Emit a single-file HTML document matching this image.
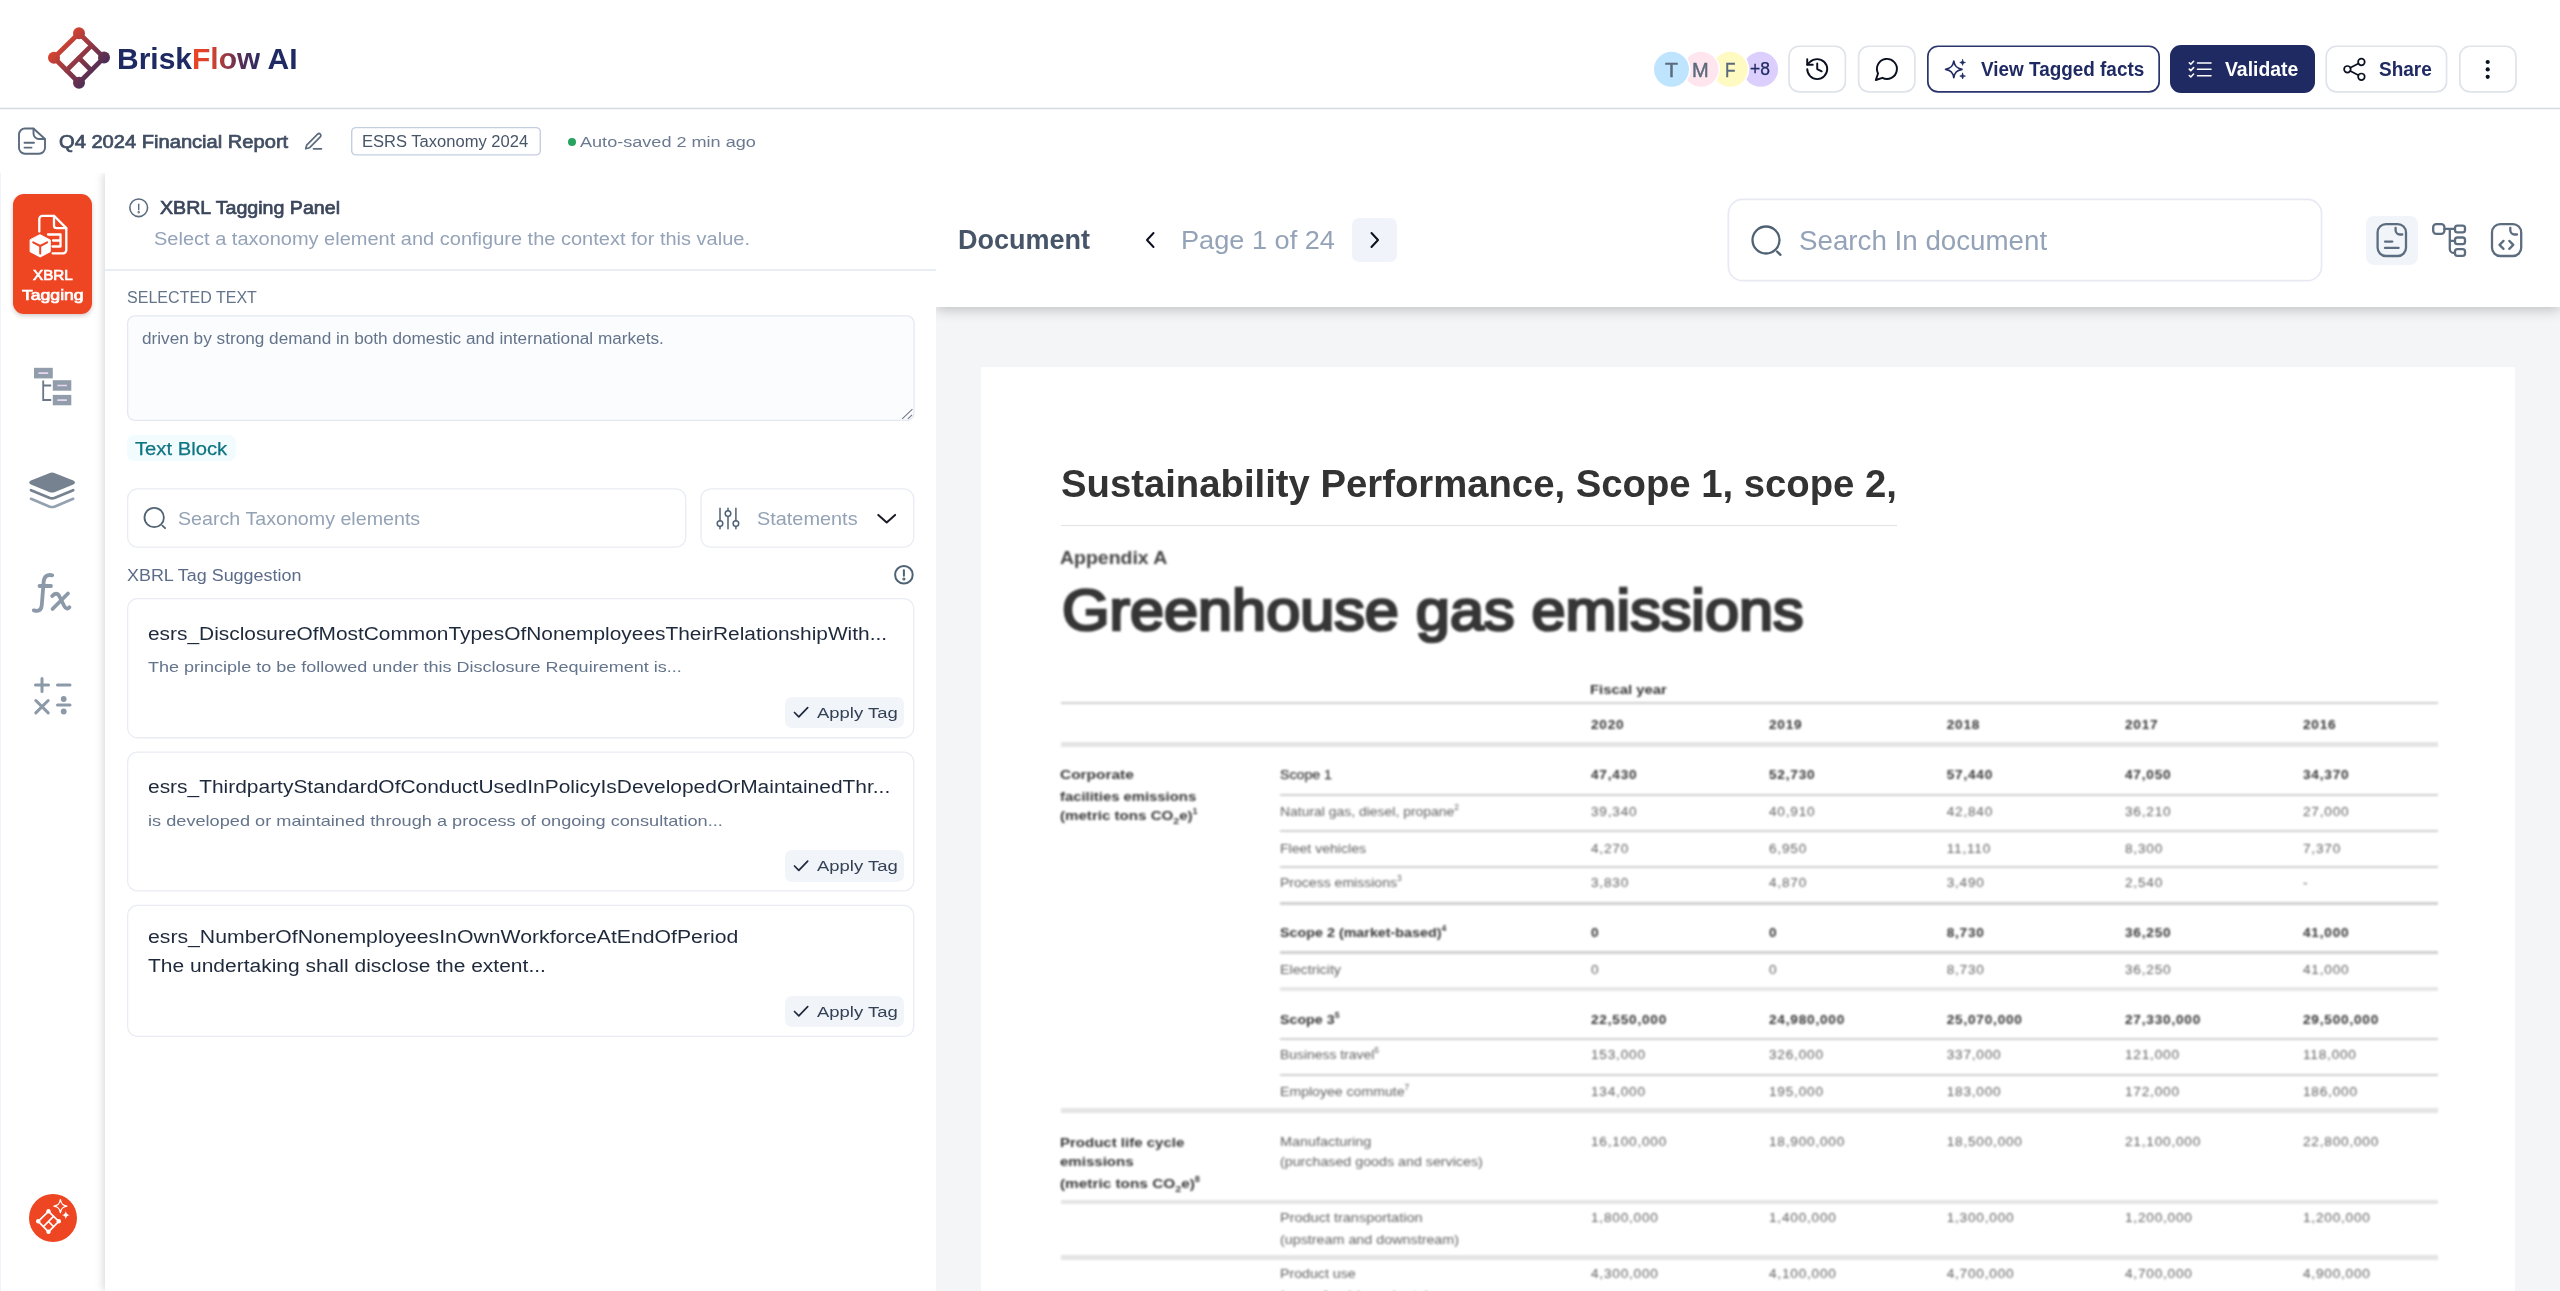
<!DOCTYPE html>
<html lang="en">
<head>
<meta charset="utf-8">
<title>BriskFlow AI - XBRL Tagging</title>
<style>
*{box-sizing:border-box;margin:0;padding:0}
html,body{width:2560px;height:1291px;overflow:hidden;background:#fff;font-family:"Liberation Sans",sans-serif;}
body{position:relative}
.abs{position:absolute}
.t{position:absolute;white-space:nowrap;transform-origin:0 50%;line-height:1}
.b{font-weight:bold}
.sb{-webkit-text-stroke:0.45px currentColor}
.sb1{-webkit-text-stroke:0.25px currentColor}
.sb2{-webkit-text-stroke:0.7px currentColor}
/* layout blocks */
#hdrline{display:none}
#side{left:0;top:173px;width:105px;height:1118px;background:#fff;border-left:1.5px solid #f1f4fa}
#panel{left:105px;top:173px;width:831px;height:1118px;background:#fff;box-shadow:-2px 0 8px rgba(0,0,0,.15);clip-path:inset(0 0 0 -30px)}
#sidecover{display:none}
#phline{left:105px;top:269px;width:831px;height:2px;background:#e9edf4}
#doc{left:936px;top:172px;width:1624px;height:1119px;background:#f4f5f7;overflow:hidden}
#tool{left:0;top:0;width:1624px;height:135px;background:#fff;box-shadow:0 3px 12px rgba(0,0,0,.22)}
#page{left:45px;top:195px;width:1534px;height:1000px;background:#fff}
.btn{border:2px solid #e2e6ec;border-radius:11px;background:#fff}
.card{border:1.5px solid #e8ebf3;border-radius:11px;background:#fff}
.apply{background:#f1f4f9;border-radius:7px}
.av{border-radius:50%;width:35px;height:35px;box-shadow:0 0 0 1.6px #fff}
.ln{position:absolute;background:#cfcfcf;height:1.6px}
.blurw{left:0;top:0;width:2560px;height:1291px;filter:blur(1px)}
.blurw2{left:0;top:0;width:2560px;height:1291px;filter:blur(1.1px)}
.hs{-webkit-text-stroke:2.7px currentColor}
.num{letter-spacing:.8px}
</style>
</head>
<body>
<!-- ===== top header ===== -->
<div class="abs" id="hdrline"></div>

<!-- avatars -->
<svg class="abs" style="left:1640px;top:40px" width="150" height="60" viewBox="1640 40 150 60">
<circle cx="1760.6" cy="69.3" r="17.5" fill="#dccffd"/>
<circle cx="1730.2" cy="69.3" r="19.1" fill="#fff"/><circle cx="1730.2" cy="69.3" r="17.5" fill="#fff9c2"/>
<circle cx="1701" cy="69.3" r="19.1" fill="#fff"/><circle cx="1701" cy="69.3" r="17.5" fill="#ffe6ee"/>
<circle cx="1671.5" cy="69.3" r="19.1" fill="#fff"/><circle cx="1671.5" cy="69.3" r="17.5" fill="#bfe4fd"/>
</svg>

<!-- header buttons -->
<div class="abs" style="left:2170px;top:45px;width:145px;height:48px;border-radius:11px;background:#1f2a63"></div>

<!-- ===== sub header ===== -->
<div class="abs" style="left:568px;top:137.5px;width:8px;height:8px;border-radius:50%;background:#27a35f"></div>

<!-- ===== sidebar + panel ===== -->
<div class="abs" id="side"></div>
<div class="abs" id="panel"></div>
<div class="abs" id="sidecover"></div>
<div class="abs" id="phline"></div>
<div class="abs" style="left:13px;top:194.3px;width:79px;height:119.6px;border-radius:11px;background:#ee4523;box-shadow:0 2px 4px rgba(60,20,10,.22)"></div>
<div class="abs" style="left:28.5px;top:1193.5px;width:48px;height:48px;border-radius:50%;background:#ee4523"></div>

<!-- panel widgets -->
<div class="abs" style="left:126.8px;top:435px;width:109.4px;height:26px;border-radius:7px;background:#f2fcfe"></div>
<div class="abs apply" style="left:785px;top:696.5px;width:119px;height:31.5px"></div>
<div class="abs apply" style="left:785px;top:850px;width:119px;height:31.5px"></div>
<div class="abs apply" style="left:785px;top:995.5px;width:119px;height:31.5px"></div>

<!-- ===== document area ===== -->
<div class="abs" id="doc">
  <div class="abs" id="page"></div>
  <div class="abs" id="tool"></div>
</div>
<div class="abs" style="left:1352px;top:218px;width:45px;height:44px;border-radius:7px;background:#f0f4fa"></div>
<div class="abs" style="left:2365.5px;top:215.5px;width:52.5px;height:49px;border-radius:8px;background:#f1f5f9"></div>
<div class="abs" style="left:1061px;top:524.5px;width:836px;height:1.5px;background:#e3e3e6"></div>

<svg class="abs" style="left:0;top:0" width="2560" height="1291" viewBox="0 0 2560 1291">
<rect x="1789.05" y="46.25" width="56.30" height="45.70" rx="10.2" fill="none" stroke="#dfe3ea" stroke-width="1.7"/>
<rect x="1858.65" y="46.25" width="56.20" height="45.70" rx="10.2" fill="none" stroke="#dfe3ea" stroke-width="1.7"/>
<rect x="1927.85" y="46.25" width="231.30" height="45.70" rx="10.2" fill="none" stroke="#2a356d" stroke-width="1.7"/>
<rect x="2326.25" y="46.25" width="120.30" height="45.70" rx="10.2" fill="none" stroke="#dfe3ea" stroke-width="1.7"/>
<rect x="2459.85" y="46.25" width="56.10" height="45.70" rx="10.2" fill="none" stroke="#dfe3ea" stroke-width="1.7"/>
<rect x="351.70" y="127.60" width="188.60" height="27.30" rx="4.3" fill="none" stroke="#c3cee2" stroke-width="1.4"/>
<rect x="127.65" y="315.85" width="786.40" height="104.50" rx="7.3" fill="#fbfcfe" stroke="#e4e8f1" stroke-width="1.3"/>
<rect x="127.65" y="488.85" width="558.10" height="58.20" rx="9.8" fill="none" stroke="#e9ecf4" stroke-width="1.3"/>
<rect x="700.95" y="488.85" width="212.80" height="58.20" rx="9.8" fill="none" stroke="#e9ecf4" stroke-width="1.3"/>
<rect x="127.65" y="598.65" width="786.10" height="139.10" rx="9.8" fill="none" stroke="#e9ecf4" stroke-width="1.3"/>
<rect x="127.65" y="752.15" width="786.10" height="138.80" rx="9.8" fill="none" stroke="#e9ecf4" stroke-width="1.3"/>
<rect x="127.65" y="905.35" width="786.10" height="131.00" rx="9.8" fill="none" stroke="#e9ecf4" stroke-width="1.3"/>
<rect x="1728.35" y="199.35" width="593.20" height="81.30" rx="14.2" fill="#fff" stroke="#e8eaf3" stroke-width="1.7"/>
<path d="M0 108.6H2560" stroke="#d4dae4" stroke-width="1.5"/>
</svg>
<!-- table lines -->


<!-- ===== text ===== -->
<span class="t b" style="left:117.0px;top:43.9px;font-size:29.4px;color:#1f2a63;transform:scaleX(1.0201);">Brisk<span style="background:linear-gradient(90deg,#ee4523 0%,#d2412f 30%,#5b2f55 70%,#2a2a62 100%);-webkit-background-clip:text;background-clip:text;color:transparent">Flow</span> AI</span>
<span class="t b" style="left:1980.5px;top:59.9px;font-size:19.5px;color:#1f2a63;transform:scaleX(0.9696);">View Tagged facts</span>
<span class="t b" style="left:2224.6px;top:59.7px;font-size:19.5px;color:#fff;transform:scaleX(0.9937);">Validate</span>
<span class="t b" style="left:2378.9px;top:59.7px;font-size:19.5px;color:#1f2a63;transform:scaleX(0.9747);">Share</span>
<span class="t sb" style="left:1664.8px;top:58.5px;font-size:21px;color:#5b6b7e;transform:scaleX(1.0125);">T</span>
<span class="t sb" style="left:1692.3px;top:58.5px;font-size:21px;color:#5b6b7e;transform:scaleX(0.9545);">M</span>
<span class="t sb" style="left:1724.9px;top:58.5px;font-size:21px;color:#5b6b7e;transform:scaleX(0.8188);">F</span>
<span class="t sb1" style="left:1750.3px;top:60.7px;font-size:17.5px;color:#1f2a63;transform:scaleX(0.9985);">+8</span>
<span class="t sb2" style="left:58.9px;top:133.0px;font-size:18px;color:#414e63;transform:scaleX(1.1174);">Q4 2024 Financial Report</span>
<span class="t " style="left:362.4px;top:133.8px;font-size:16px;color:#475569;transform:scaleX(1.0340);">ESRS Taxonomy 2024</span>
<span class="t " style="left:580.4px;top:134.2px;font-size:15.2px;color:#6b7a90;transform:scaleX(1.1903);">Auto-saved 2 min ago</span>
<span class="t sb2" style="left:32.7px;top:267.7px;font-size:14px;color:#fff;transform:scaleX(1.0871);">XBRL</span>
<span class="t sb2" style="left:22.0px;top:287.8px;font-size:14px;color:#fff;transform:scaleX(1.2566);">Tagging</span>
<span class="t sb2" style="left:160.0px;top:199.1px;font-size:18.6px;color:#3b465b;transform:scaleX(1.0557);">XBRL Tagging Panel</span>
<span class="t " style="left:154.3px;top:229.9px;font-size:18.3px;color:#94a3b8;transform:scaleX(1.0942);">Select a taxonomy element and configure the context for this value.</span>
<span class="t " style="left:126.5px;top:289.7px;font-size:15.6px;color:#64748b;transform:scaleX(1.0292);">SELECTED TEXT</span>
<span class="t " style="left:142.1px;top:330.7px;font-size:15.8px;color:#64748b;transform:scaleX(1.0884);">driven by strong demand in both domestic and international markets.</span>
<span class="t sb1" style="left:135.3px;top:439.1px;font-size:19.2px;color:#0f7582;transform:scaleX(1.0545);">Text Block</span>
<span class="t " style="left:177.7px;top:509.4px;font-size:19px;color:#93a2b5;transform:scaleX(1.0345);">Search Taxonomy elements</span>
<span class="t " style="left:757.0px;top:509.4px;font-size:19px;color:#93a2b5;transform:scaleX(1.0466);">Statements</span>
<span class="t " style="left:126.6px;top:567.7px;font-size:15.6px;color:#5b6b88;transform:scaleX(1.1492);">XBRL Tag Suggestion</span>
<span class="t " style="left:147.5px;top:624.7px;font-size:18px;color:#1e293b;transform:scaleX(1.1598);">esrs_DisclosureOfMostCommonTypesOfNonemployeesTheirRelationshipWith...</span>
<span class="t " style="left:147.6px;top:659.2px;font-size:15px;color:#64748b;transform:scaleX(1.2011);">The principle to be followed under this Disclosure Requirement is...</span>
<span class="t " style="left:817.2px;top:704.9px;font-size:15.3px;color:#334155;transform:scaleX(1.2060);">Apply Tag</span>
<span class="t " style="left:147.5px;top:778.2px;font-size:18px;color:#1e293b;transform:scaleX(1.1628);">esrs_ThirdpartyStandardOfConductUsedInPolicyIsDevelopedOrMaintainedThr...</span>
<span class="t " style="left:147.6px;top:812.8px;font-size:15px;color:#64748b;transform:scaleX(1.2114);">is developed or maintained through a process of ongoing consultation...</span>
<span class="t " style="left:817.2px;top:858.4px;font-size:15.3px;color:#334155;transform:scaleX(1.2060);">Apply Tag</span>
<span class="t " style="left:147.5px;top:927.6px;font-size:18px;color:#1e293b;transform:scaleX(1.1785);">esrs_NumberOfNonemployeesInOwnWorkforceAtEndOfPeriod</span>
<span class="t " style="left:147.5px;top:957.1px;font-size:18px;color:#1e293b;transform:scaleX(1.1661);">The undertaking shall disclose the extent...</span>
<span class="t " style="left:817.2px;top:1003.9px;font-size:15.3px;color:#334155;transform:scaleX(1.2060);">Apply Tag</span>
<span class="t b" style="left:958.1px;top:225.7px;font-size:28px;color:#475569;transform:scaleX(0.9648);">Document</span>
<span class="t " style="left:1181.1px;top:227.0px;font-size:26.5px;color:#94a3b8;transform:scaleX(1.0240);">Page 1 of 24</span>
<span class="t " style="left:1798.8px;top:226.7px;font-size:27.5px;color:#94a3b8;transform:scaleX(1.0082);">Search In document</span>
<span class="t b" style="left:1061.0px;top:463.6px;font-size:39px;color:#333;transform:scaleX(0.9813);">Sustainability Performance, Scope 1, scope 2,</span>
<div class="abs blurw2">
<span class="t b" style="left:1060.3px;top:548.6px;font-size:18px;color:#444;transform:scaleX(1.0807);">Appendix A</span>
<span class="t hs" style="left:1062.2px;top:581.5px;font-size:57.5px;color:#363636;transform:scaleX(1.0644);">Greenhouse gas emissions</span>
</div>
<div class="abs blurw">
<div class="ln" style="left:1061.0px;top:701.5px;width:1376.5px;height:2.0px;background:#cfcfcf"></div>
<div class="ln" style="left:1061.0px;top:742.3px;width:1376.5px;height:4.6px;background:#e4e4e4"></div>
<div class="ln" style="left:1280.0px;top:793.9px;width:1157.5px;height:2.2px;background:#d0d0d0"></div>
<div class="ln" style="left:1280.0px;top:830.2px;width:1157.5px;height:2.2px;background:#d0d0d0"></div>
<div class="ln" style="left:1280.0px;top:865.9px;width:1157.5px;height:2.2px;background:#d0d0d0"></div>
<div class="ln" style="left:1280.0px;top:902.4px;width:1157.5px;height:2.2px;background:#d0d0d0"></div>
<div class="ln" style="left:1280.0px;top:951.4px;width:1157.5px;height:2.2px;background:#d0d0d0"></div>
<div class="ln" style="left:1280.0px;top:1038.3px;width:1157.5px;height:2.2px;background:#d0d0d0"></div>
<div class="ln" style="left:1280.0px;top:1073.9px;width:1157.5px;height:2.2px;background:#d0d0d0"></div>
<div class="ln" style="left:1280.0px;top:986.8px;width:1157.5px;height:4.4px;background:#e6e6e6"></div>
<div class="ln" style="left:1061.0px;top:1108.2px;width:1376.5px;height:4.8px;background:#e4e4e4"></div>
<div class="ln" style="left:1061.0px;top:1199.6px;width:1376.5px;height:4.8px;background:#e4e4e4"></div>
<div class="ln" style="left:1061.0px;top:1255.2px;width:1376.5px;height:4.8px;background:#e4e4e4"></div>
<span class="t b  num" style="left:1591.0px;top:717.8px;font-size:13.6px;color:#363636;">2020</span>
<span class="t b  num" style="left:1769.0px;top:717.8px;font-size:13.6px;color:#363636;">2019</span>
<span class="t b  num" style="left:1946.7px;top:717.8px;font-size:13.6px;color:#363636;">2018</span>
<span class="t b  num" style="left:2125.0px;top:717.8px;font-size:13.6px;color:#363636;">2017</span>
<span class="t b  num" style="left:2303.0px;top:717.8px;font-size:13.6px;color:#363636;">2016</span>
<span class="t sb1" style="left:1279.5px;top:768.4px;font-size:13.6px;color:#363636;transform:scaleX(1.0421);">Scope 1</span>
<span class="t b  num" style="left:1591.0px;top:768.4px;font-size:13.6px;color:#363636;">47,430</span>
<span class="t b  num" style="left:1769.0px;top:768.4px;font-size:13.6px;color:#363636;">52,730</span>
<span class="t b  num" style="left:1946.7px;top:768.4px;font-size:13.6px;color:#363636;">57,440</span>
<span class="t b  num" style="left:2125.0px;top:768.4px;font-size:13.6px;color:#363636;">47,050</span>
<span class="t b  num" style="left:2303.0px;top:768.4px;font-size:13.6px;color:#363636;">34,370</span>
<span class="t " style="left:1279.5px;top:805.4px;font-size:13.6px;color:#626262;transform:scaleX(1.0252);">Natural gas, diesel, propane<sup style="font-size:60%;line-height:0;vertical-align:super">2</sup></span>
<span class="t num" style="left:1591.0px;top:805.4px;font-size:13.6px;color:#626262;">39,340</span>
<span class="t num" style="left:1769.0px;top:805.4px;font-size:13.6px;color:#626262;">40,910</span>
<span class="t num" style="left:1946.7px;top:805.4px;font-size:13.6px;color:#626262;">42,840</span>
<span class="t num" style="left:2125.0px;top:805.4px;font-size:13.6px;color:#626262;">36,210</span>
<span class="t num" style="left:2303.0px;top:805.4px;font-size:13.6px;color:#626262;">27,000</span>
<span class="t " style="left:1279.5px;top:841.9px;font-size:13.6px;color:#626262;transform:scaleX(1.0346);">Fleet vehicles</span>
<span class="t num" style="left:1591.0px;top:841.9px;font-size:13.6px;color:#626262;">4,270</span>
<span class="t num" style="left:1769.0px;top:841.9px;font-size:13.6px;color:#626262;">6,950</span>
<span class="t num" style="left:1946.7px;top:841.9px;font-size:13.6px;color:#626262;">11,110</span>
<span class="t num" style="left:2125.0px;top:841.9px;font-size:13.6px;color:#626262;">8,300</span>
<span class="t num" style="left:2303.0px;top:841.9px;font-size:13.6px;color:#626262;">7,370</span>
<span class="t " style="left:1279.5px;top:876.1px;font-size:13.6px;color:#626262;transform:scaleX(1.0323);">Process emissions<sup style="font-size:60%;line-height:0;vertical-align:super">3</sup></span>
<span class="t num" style="left:1591.0px;top:876.1px;font-size:13.6px;color:#626262;">3,830</span>
<span class="t num" style="left:1769.0px;top:876.1px;font-size:13.6px;color:#626262;">4,870</span>
<span class="t num" style="left:1946.7px;top:876.1px;font-size:13.6px;color:#626262;">3,490</span>
<span class="t num" style="left:2125.0px;top:876.1px;font-size:13.6px;color:#626262;">2,540</span>
<span class="t num" style="left:2303.0px;top:876.1px;font-size:13.6px;color:#626262;">-</span>
<span class="t b" style="left:1279.5px;top:926.4px;font-size:13.6px;color:#363636;transform:scaleX(1.0531);">Scope 2 (market-based)<sup style="font-size:60%;line-height:0;vertical-align:super">4</sup></span>
<span class="t b  num" style="left:1591.0px;top:926.4px;font-size:13.6px;color:#363636;">0</span>
<span class="t b  num" style="left:1769.0px;top:926.4px;font-size:13.6px;color:#363636;">0</span>
<span class="t b  num" style="left:1946.7px;top:926.4px;font-size:13.6px;color:#363636;">8,730</span>
<span class="t b  num" style="left:2125.0px;top:926.4px;font-size:13.6px;color:#363636;">36,250</span>
<span class="t b  num" style="left:2303.0px;top:926.4px;font-size:13.6px;color:#363636;">41,000</span>
<span class="t " style="left:1279.5px;top:963.4px;font-size:13.6px;color:#626262;transform:scaleX(1.0486);">Electricity</span>
<span class="t num" style="left:1591.0px;top:963.4px;font-size:13.6px;color:#626262;">0</span>
<span class="t num" style="left:1769.0px;top:963.4px;font-size:13.6px;color:#626262;">0</span>
<span class="t num" style="left:1946.7px;top:963.4px;font-size:13.6px;color:#626262;">8,730</span>
<span class="t num" style="left:2125.0px;top:963.4px;font-size:13.6px;color:#626262;">36,250</span>
<span class="t num" style="left:2303.0px;top:963.4px;font-size:13.6px;color:#626262;">41,000</span>
<span class="t b" style="left:1279.5px;top:1013.4px;font-size:13.6px;color:#363636;transform:scaleX(1.0478);">Scope 3<sup style="font-size:60%;line-height:0;vertical-align:super">5</sup></span>
<span class="t b  num" style="left:1591.0px;top:1013.4px;font-size:13.6px;color:#363636;">22,550,000</span>
<span class="t b  num" style="left:1769.0px;top:1013.4px;font-size:13.6px;color:#363636;">24,980,000</span>
<span class="t b  num" style="left:1946.7px;top:1013.4px;font-size:13.6px;color:#363636;">25,070,000</span>
<span class="t b  num" style="left:2125.0px;top:1013.4px;font-size:13.6px;color:#363636;">27,330,000</span>
<span class="t b  num" style="left:2303.0px;top:1013.4px;font-size:13.6px;color:#363636;">29,500,000</span>
<span class="t " style="left:1279.5px;top:1048.4px;font-size:13.6px;color:#626262;transform:scaleX(1.0221);">Business travel<sup style="font-size:60%;line-height:0;vertical-align:super">6</sup></span>
<span class="t num" style="left:1591.0px;top:1048.4px;font-size:13.6px;color:#626262;">153,000</span>
<span class="t num" style="left:1769.0px;top:1048.4px;font-size:13.6px;color:#626262;">326,000</span>
<span class="t num" style="left:1946.7px;top:1048.4px;font-size:13.6px;color:#626262;">337,000</span>
<span class="t num" style="left:2125.0px;top:1048.4px;font-size:13.6px;color:#626262;">121,000</span>
<span class="t num" style="left:2303.0px;top:1048.4px;font-size:13.6px;color:#626262;">118,000</span>
<span class="t " style="left:1279.5px;top:1085.4px;font-size:13.6px;color:#626262;transform:scaleX(1.0361);">Employee commute<sup style="font-size:60%;line-height:0;vertical-align:super">7</sup></span>
<span class="t num" style="left:1591.0px;top:1085.4px;font-size:13.6px;color:#626262;">134,000</span>
<span class="t num" style="left:1769.0px;top:1085.4px;font-size:13.6px;color:#626262;">195,000</span>
<span class="t num" style="left:1946.7px;top:1085.4px;font-size:13.6px;color:#626262;">183,000</span>
<span class="t num" style="left:2125.0px;top:1085.4px;font-size:13.6px;color:#626262;">172,000</span>
<span class="t num" style="left:2303.0px;top:1085.4px;font-size:13.6px;color:#626262;">186,000</span>
<span class="t " style="left:1279.5px;top:1135.4px;font-size:13.6px;color:#626262;transform:scaleX(1.0586);">Manufacturing</span>
<span class="t num" style="left:1591.0px;top:1135.4px;font-size:13.6px;color:#626262;">16,100,000</span>
<span class="t num" style="left:1769.0px;top:1135.4px;font-size:13.6px;color:#626262;">18,900,000</span>
<span class="t num" style="left:1946.7px;top:1135.4px;font-size:13.6px;color:#626262;">18,500,000</span>
<span class="t num" style="left:2125.0px;top:1135.4px;font-size:13.6px;color:#626262;">21,100,000</span>
<span class="t num" style="left:2303.0px;top:1135.4px;font-size:13.6px;color:#626262;">22,800,000</span>
<span class="t " style="left:1279.5px;top:1155.1px;font-size:13.6px;color:#626262;transform:scaleX(1.0483);">(purchased goods and services)</span>
<span class="t " style="left:1279.5px;top:1210.9px;font-size:13.6px;color:#626262;transform:scaleX(1.0655);">Product transportation</span>
<span class="t num" style="left:1591.0px;top:1210.9px;font-size:13.6px;color:#626262;">1,800,000</span>
<span class="t num" style="left:1769.0px;top:1210.9px;font-size:13.6px;color:#626262;">1,400,000</span>
<span class="t num" style="left:1946.7px;top:1210.9px;font-size:13.6px;color:#626262;">1,300,000</span>
<span class="t num" style="left:2125.0px;top:1210.9px;font-size:13.6px;color:#626262;">1,200,000</span>
<span class="t num" style="left:2303.0px;top:1210.9px;font-size:13.6px;color:#626262;">1,200,000</span>
<span class="t " style="left:1279.5px;top:1233.2px;font-size:13.6px;color:#626262;transform:scaleX(1.0530);">(upstream and downstream)</span>
<span class="t " style="left:1279.5px;top:1266.7px;font-size:13.6px;color:#626262;transform:scaleX(1.0434);">Product use</span>
<span class="t num" style="left:1591.0px;top:1266.7px;font-size:13.6px;color:#626262;">4,300,000</span>
<span class="t num" style="left:1769.0px;top:1266.7px;font-size:13.6px;color:#626262;">4,100,000</span>
<span class="t num" style="left:1946.7px;top:1266.7px;font-size:13.6px;color:#626262;">4,700,000</span>
<span class="t num" style="left:2125.0px;top:1266.7px;font-size:13.6px;color:#626262;">4,700,000</span>
<span class="t num" style="left:2303.0px;top:1266.7px;font-size:13.6px;color:#626262;">4,900,000</span>
<span class="t " style="left:1279.4px;top:1288.9px;font-size:13.6px;color:#626262;transform:scaleX(1.1559);">(use of sold products)</span>
<span class="t b" style="left:1590.3px;top:683.1px;font-size:13.6px;color:#363636;transform:scaleX(1.0916);">Fiscal year</span>
<span class="t b" style="left:1060.3px;top:768.4px;font-size:13.6px;color:#363636;transform:scaleX(1.1356);">Corporate</span>
<span class="t b" style="left:1060.3px;top:790.0px;font-size:13.6px;color:#363636;transform:scaleX(1.0920);">facilities emissions</span>
<span class="t b" style="left:1060.3px;top:808.7px;font-size:13.6px;color:#363636;transform:scaleX(1.1110);">(metric tons CO<sub style="font-size:70%;line-height:0">2</sub>e)<sup style="font-size:60%;line-height:0;vertical-align:super">1</sup></span>
<span class="t b" style="left:1060.3px;top:1135.8px;font-size:13.6px;color:#363636;transform:scaleX(1.1037);">Product life cycle</span>
<span class="t b" style="left:1060.3px;top:1155.1px;font-size:13.6px;color:#363636;transform:scaleX(1.1076);">emissions</span>
<span class="t b" style="left:1060.3px;top:1176.8px;font-size:13.6px;color:#363636;transform:scaleX(1.1297);">(metric tons CO<sub style="font-size:70%;line-height:0">2</sub>e)<sup style="font-size:60%;line-height:0;vertical-align:super">8</sup></span>
</div>

<!-- ===== icons ===== -->
<svg class="abs" style="left:0;top:0;pointer-events:none" width="2560" height="1291" viewBox="0 0 2560 1291" fill="none" stroke-linecap="round" stroke-linejoin="round">
<defs>
<linearGradient id="lg" gradientUnits="userSpaceOnUse" x1="56" y1="38" x2="102" y2="80"><stop offset="0" stop-color="#e9462a"/><stop offset="1" stop-color="#33295f"/></linearGradient>
</defs>
<!-- logo -->
<g stroke="url(#lg)" stroke-width="4.8">
<path d="M79 33.3L54 57.8L79 82.8L104 57.6Z"/>
<path d="M66.6 70.2L91.4 45.6"/>
<path d="M79 58L91.2 70.4"/>
</g>
<g fill="url(#lg)"><circle cx="79" cy="33.3" r="6"/><circle cx="54" cy="57.8" r="6"/><circle cx="104" cy="57.6" r="6"/><circle cx="79" cy="82.8" r="6"/></g>

<!-- history icon -->
<g stroke="#0b1020" stroke-width="1.75" transform="translate(1803.9 55.8) scale(1.11)">
<path d="M3 12a9 9 0 1 0 9-9 9.75 9.75 0 0 0-6.74 2.74L3 8"/><path d="M3 3v5h5"/><path d="M12 7v5l4 2"/>
</g>
<!-- comment icon -->
<g stroke="#0b1020" stroke-width="1.75" transform="translate(1873.6 55.6) scale(1.11)">
<path d="M7.9 20A9 9 0 1 0 4 16.1L2 22Z"/>
</g>
<!-- sparkles -->
<g stroke="#1f2a63" stroke-width="1.7">
<path d="M1953.8 61.2c.9 5.2 2.9 7.3 8.2 8.2c-5.3.9-7.3 3-8.2 8.2c-.9-5.2-2.900-7.3-8.2-8.200c5.300-.9 7.300-3 8.200-8.200z"/>
<path d="M1962.600 59.700c.3 1.800 1 2.500 2.800 2.800c-1.800.300-2.500 1-2.800 2.800c-.3-1.800-1-2.500-2.800-2.800c1.800-.300 2.500-1 2.800-2.800z" fill="#1f2a63" stroke-width="0.8"/>
<path d="M1962.600 73.300c.3 1.800 1 2.500 2.800 2.800c-1.800.300-2.500 1-2.800 2.800c-.3-1.800-1-2.500-2.800-2.800c1.800-.300 2.500-1 2.800-2.800z" fill="#1f2a63" stroke-width="0.8"/>
</g>
<!-- list-check (validate) -->
<g stroke="#fff" stroke-width="1.6">
<path d="M2197.500 63h13.500M2197.500 69.300h13.500M2197.500 75.700h13.500"/>
<path d="M2189.300 62.800l1.500 1.500l2.800-3M2189.300 69.100l1.500 1.500l2.800-3M2189.300 75.500l1.500 1.500l2.800-3"/>
</g>
<!-- share -->
<g stroke="#0b1020" stroke-width="1.7">
<circle cx="2361.400" cy="62" r="3.300"/><circle cx="2347.400" cy="69.300" r="3.300"/><circle cx="2361.400" cy="76.800" r="3.300"/>
<path d="M2350.300 67.800l8.200-4.300M2350.300 70.900l8.200 4.300"/>
</g>
<!-- more dots -->
<g fill="#0b1020"><circle cx="2487.700" cy="62" r="2.100"/><circle cx="2487.700" cy="69.400" r="2.100"/><circle cx="2487.700" cy="76.800" r="2.100"/></g>

<!-- file icon (subheader) -->
<g stroke="#5b6b7e" stroke-width="1.9">
<path d="M33.500 128.500h-8.500a6 6 0 0 0-6 6v13.300a6 6 0 0 0 6 6h14a6 6 0 0 0 6-6v-8.800z"/>
<path d="M33.500 128.700v4.800a5.500 5.500 0 0 0 5.500 5.500h5.800"/>
<path d="M24.500 142.700h9.500M24.500 147.600h7"/>
</g>
<!-- pencil -->
<g stroke="#5b6b7e" stroke-width="1.7">
<path d="M317.600 134.200a1.900 1.900 0 0 1 2.700 2.700l-10.900 10.900l-3.700 1l1-3.700z"/>
<path d="M313.500 148.800h8"/>
</g>
<!-- info icons -->
<g stroke="#5b6b7e" stroke-width="1.6">
<circle cx="138.700" cy="207.800" r="8.850"/><path d="M138.700 204.200v5.600" stroke-width="1.400"/><circle cx="138.700" cy="212.200" r=".4" fill="#5b6b7e"/>
</g>
<g stroke="#4f6274" stroke-width="2">
<circle cx="903.900" cy="574.700" r="8.800"/><path d="M903.900 570.300v5.500"/><circle cx="903.900" cy="579" r=".6" fill="#4f6274"/>
</g>

<!-- XBRL icon -->
<g stroke="#fff" stroke-width="2.3">
<path d="M39.300 231.500v-12.500a3.200 3.200 0 0 1 3.200-3.200h11.500l12.300 12.300v22a3.200 3.200 0 0 1-3.200 3.200h-10.500"/>
<path d="M54 216v9.500a2.700 2.700 0 0 0 2.700 2.700h9.500"/>
<path d="M48 234.500h12.500v12h-8M53 240.500h7.500"/>
</g>
<path d="M40.200 234.800l10.100 5.300v11.600l-10.100 5.300l-10.100-5.300v-11.600z" fill="#fff" stroke="#fff" stroke-width="1"/>
<path d="M33.200 242.300l7 3.700l7-3.700M40.200 246v7.500" stroke="#ee4523" stroke-width="2"/>

<!-- sidebar: tree -->
<g>
<rect x="34" y="367.800" width="18.800" height="10.600" fill="#929dab"/>
<rect x="52.800" y="380.200" width="18.500" height="10.500" fill="#929dab"/>
<rect x="52.800" y="394.900" width="18.500" height="10.400" fill="#929dab"/>
<path d="M43.200 380.500v19.500h8M43.200 385.500h8" stroke="#6b7686" stroke-width="1.8" stroke-linecap="butt" stroke-linejoin="miter"/>
<path d="M38.400 373.100h9.800M57.300 385.500h9.600M57.300 400.100h9.600" stroke="#e6d8f1" stroke-width="1.700" stroke-linecap="butt"/>
</g>
<!-- sidebar: layers -->
<path d="M49.200 473.200c1.900-.800 3.900-.800 5.800 0l18.300 7.400c2.300 1 2.300 3 0 4l-18.300 7.400c-1.900.800-3.900.800-5.800 0l-18.300-7.400c-2.300-1-2.300-3 0-4z" fill="#76828f"/>
<path d="M31 490.200l18.200 7.600c1.900.800 3.900.800 5.800 0l18.200-7.600" stroke="#76828f" stroke-width="2.700"/>
<path d="M31 498.800l18.200 7.600c1.900.800 3.900.800 5.800 0l18.200-7.600" stroke="#94a2b0" stroke-width="2.700"/>
<!-- sidebar: fx -->
<g stroke="#8c99a8" stroke-width="3.800">
<path d="M52.200 575.300c-5.500-1.300-8.200 1.500-8.600 7l-1.800 22.500c-.4 5.500-3.300 7-8 5.600"/>
<path d="M39.500 586h11.500"/>
<path d="M52.200 596c2.500-3 5.300-3 7 0l5 10c1.500 3 3.500 3.300 5.200 1.200"/>
<path d="M68 593.500l-15.500 15.500"/>
</g>
<!-- sidebar: calc -->
<g stroke="#8c99a8" stroke-width="3">
<path d="M35.500 685h13M42 678.500v13"/>
<path d="M57.500 685h12.500"/>
<path d="M35.800 700.500l12.400 12.400M48.200 700.500l-12.400 12.400"/>
<path d="M57.500 705h12.500"/>
</g>
<g fill="#8c99a8"><circle cx="63.700" cy="699" r="2.900"/><circle cx="63.700" cy="711.500" r="2.900"/></g>

<!-- bottom-left AI logo -->
<g stroke="#fff" stroke-width="1.700">
<path d="M48.500 1211.300l-10.300 10l10.300 10.500l10.300-10.500z"/>
<path d="M43.500 1226.500l10-10.100M48.500 1221.500l5 5"/>
</g>
<g fill="#fff"><circle cx="48.500" cy="1211.300" r="2.200"/><circle cx="38.200" cy="1221.300" r="2.200"/><circle cx="58.800" cy="1221.300" r="2.200"/><circle cx="48.500" cy="1231.800" r="2.200"/></g>
<path d="M60.400 1199.700c.7 4.200 2.200 5.800 6.500 6.500c-4.300.700-5.800 2.300-6.500 6.500c-.7-4.200-2.200-5.800-6.500-6.500c4.300-.700 5.800-2.300 6.500-6.500z" stroke="#fff" stroke-width="1.300"/>
<path d="M65.800 1211c.5 2.700 1.400 3.600 4.100 4.100c-2.700.5-3.600 1.400-4.100 4.100c-.5-2.700-1.400-3.600-4.100-4.100c2.700-.5 3.600-1.400 4.100-4.100z" fill="#fff"/>

<!-- textarea resize handle -->
<path d="M902.2 418.8l10.2-9.6M907.8 418.8l4.300-4" stroke="#73778a" stroke-width="1.100" stroke-linecap="butt"/>
<!-- panel search icon -->
<g stroke="#4f6274" stroke-width="1.800"><circle cx="154.200" cy="517.500" r="9.700"/><path d="M162.400 525.700l2.700 2.500"/></g>
<!-- sliders -->
<g stroke="#4f6274" stroke-width="1.500">
<path d="M720 508.300v12.400M720 526.500v2.300M728 508.300v2.400M728 516.500v12.300M735.900 508.300v12.400M735.900 526.500v2.300"/>
<circle cx="720" cy="523.600" r="2.800"/><circle cx="728" cy="513.600" r="2.800"/><circle cx="735.900" cy="523.600" r="2.800"/>
</g>
<!-- chevron down -->
<path d="M878.300 514.900l8.400 7.600l8.400-7.600" stroke="#1b1b26" stroke-width="2"/>
<!-- apply checks -->
<g stroke="#1e293b" stroke-width="1.700">
<path d="M794.500 712.500l4.300 4.300l8.900-9.200"/>
<path d="M794.500 866l4.300 4.300l8.900-9.200"/>
<path d="M794.500 1011.500l4.300 4.300l8.900-9.200"/>
</g>

<!-- doc toolbar: prev / next -->
<path d="M1153.500 233l-6.500 7l6.500 7" stroke="#0b1020" stroke-width="2"/>
<path d="M1371.500 233l6.500 7l-6.500 7" stroke="#0b1020" stroke-width="2"/>
<!-- doc search icon -->
<g stroke="#4f6274" stroke-width="2.300"><circle cx="1766" cy="240" r="13.500"/><path d="M1777 251.500l3.500 3.300"/></g>
<!-- view icons -->
<g stroke="#5d6d80" stroke-width="2.3">
<rect x="2377.600" y="224.100" width="28.400" height="31.900" rx="8.300"/>
<path d="M2395.600 227.800v2.500a4.200 4.200 0 0 0 4.200 4.200h2.500"/>
<path d="M2385 241.600h7.300M2385 247.900h13.600"/>
<rect x="2433.200" y="224.100" width="11.200" height="9.700" rx="3"/>
<rect x="2455" y="225.600" width="10" height="6.700" rx="2.400"/>
<rect x="2455" y="237.500" width="10" height="6.700" rx="2.400"/>
<rect x="2455" y="249.200" width="10" height="6.700" rx="2.400"/>
<path d="M2444.400 228.900h10.600M2449.800 228.900v20a4 4 0 0 0 4 4h1.200M2449.800 240.800h5.200"/>
<rect x="2492" y="224.100" width="29.200" height="31.900" rx="8.300"/>
<path d="M2510.300 227.800v2.500a4.200 4.200 0 0 0 4.200 4.200h2.500"/>
<path d="M2503.500 240.900l-4 4l4 4M2509.300 240.900l4 4l-4 4"/>
</g>
</svg>

</body>
</html>
